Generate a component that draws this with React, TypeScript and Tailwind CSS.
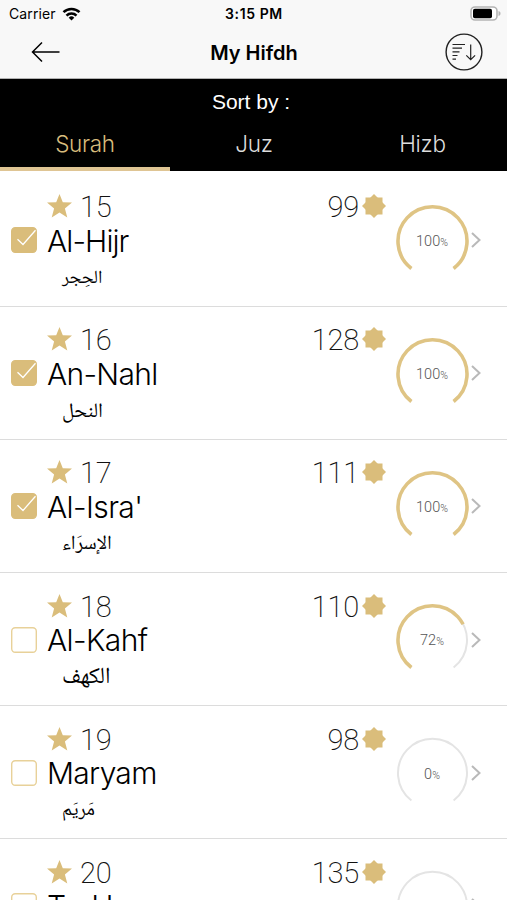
import { useState } from "react"
import clsx from "clsx"

interface Surah {
  number: number;
  name: string;
  nameClass: string;
  arabic: string;
  arabicClass: string;
  verses: number;
  progress: number;
}

const surahs: Surah[] = [
  { number: 15, name: "Al-Hijr", nameClass: "tracking-[-0.9px]", arabic: "الحِجر", arabicClass: "text-[18.5px]", verses: 99, progress: 100 },
  { number: 16, name: "An-Nahl", nameClass: "tracking-[-0.7px]", arabic: "النحل", arabicClass: "text-[20.5px]", verses: 128, progress: 100 },
  { number: 17, name: "Al-Isra'", nameClass: "tracking-[-0.6px]", arabic: "الإسرَاء", arabicClass: "text-[20px]", verses: 111, progress: 100 },
  { number: 18, name: "Al-Kahf", nameClass: "tracking-[-0.6px]", arabic: "الكهف", arabicClass: "text-[23px]", verses: 110, progress: 72 },
  { number: 19, name: "Maryam", nameClass: "tracking-[-0.7px]", arabic: "مَريَم", arabicClass: "text-[19px]", verses: 98, progress: 0 },
  { number: 20, name: "Ta-Ha", nameClass: "tracking-[-0.9px]", arabic: "طه", arabicClass: "text-[19px]", verses: 135, progress: 0 },
]

const tabs = ["Surah", "Juz", "Hizb"]

function StatusBar() {
  return (
    <div className="grid h-[27px] grid-cols-3 items-center pl-[9px] pr-[6px] text-[14px]">
      <div className="flex items-center gap-[6px]">
        <span className="tracking-[0.1px]">Carrier</span>
        <svg width="19" height="14" viewBox="0 0 18 14" fill="none" stroke="#000" strokeWidth="2.5">
          <path d="M1 5.2a11.3 11.3 0 0 1 16 0" />
          <path d="M4 8.6a7 7 0 0 1 10 0" />
          <path d="M9 13.5 6.2 10.7a4 4 0 0 1 5.6 0z" fill="#000" stroke="none" />
        </svg>
      </div>
      <span className="pr-[2px] text-center font-semibold tracking-[0.6px]">3:15 PM</span>
      <svg className="justify-self-end" width="31" height="15" viewBox="0 0 31 15">
        <rect x="1" y="1" width="26" height="13" rx="4" fill="#fff" stroke="#b4b4b4" strokeWidth="1.6" />
        <rect x="3" y="2.8" width="19" height="9.4" rx="1.8" fill="#000" />
        <path d="M28.5 5v5c1.6-.6 2-1.500 2-2.500s-.4-1.900-2-2.500z" fill="#b4b4b4" />
      </svg>
    </div>
  )
}

function Header() {
  return (
    <div className="grid h-[52px] grid-cols-[1fr_auto_1fr] items-center border-b border-[#b2b2b2] pb-[2px] pl-[31px] pr-[24px]">
      <button>
        <svg width="29" height="22" viewBox="0 0 29 22" fill="none" stroke="#000" strokeWidth="1.5">
          <path d="M28.500 11H1.500M11 1.500 1.500 11l9.500 9.500" />
        </svg>
      </button>
      <h1 className="pr-[6px] pt-[2px] text-center text-[20px] font-semibold whitespace-nowrap">My Hifdh</h1>
      <button className="justify-self-end">
        <svg width="38" height="38" viewBox="0 0 38 38" fill="none" stroke="#222">
          <circle cx="19" cy="19" r="17.900" strokeWidth="1.400" />
          <path d="M7.500 11.500h12.500M7.500 15.200h9.500M7.500 18.800h7M7.500 22.500h5M7.500 26.200h3.500" strokeWidth="1.200" />
          <path d="M25.700 11.500v15M21.300 22.300l4.400 4.400 4.400-4.400" strokeWidth="1.200" />
        </svg>
      </button>
    </div>
  )
}

function Star() {
  return (
    <svg width="25" height="24" viewBox="0 0 25 24" fill="#dabd7b">
      <path d="M12.500 0l3.300 8.200 9.200.4-7.100 5.900 2.400 9-7.800-5-7.800 5 2.400-9L0 8.600l9.200-.4z" />
    </svg>
  )
}

// Two overlaid squares, one turned by 45 degrees
function VerseMark() {
  return (
    <svg width="24" height="24" viewBox="0 0 24 24" fill="#dabd7b">
      <rect x="3.500" y="3.500" width="17" height="17" />
      <rect x="3.500" y="3.500" width="17" height="17" transform="rotate(45 12 12)" />
    </svg>
  )
}

function Checkbox({ checked }: { checked: boolean }) {
  return (
    <svg width="26" height="26" viewBox="0 0 26 26" fill="none">
      <rect
        x="0.700"
        y="0.700"
        width="24.600"
        height="24.600"
        rx="3.500"
        fill={checked ? "#dabd7b" : "#fff"}
        stroke={checked ? "#dabd7b" : "#e8d199"}
        strokeWidth="1.400"
      />
      {checked && <path d="M6.500 12.300l5.500 5.200L24.500 3.200" stroke="#fff" strokeWidth="1.300" />}
    </svg>
  )
}

function Gauge({ value }: { value: number }) {
  const arc = "M15.400 64.500A34.500 34.500 0 1 1 57.600 64.500"
  return (
    <div className="grid h-[73px] w-[73px] place-items-center">
      <svg className="col-start-1 row-start-1" width="73" height="73" viewBox="0 0 73 73" fill="none">
        <path d={arc} stroke="#e4e4e4" strokeWidth="2" />
        {value > 0 && (
          <path d={arc} stroke="#dfc484" strokeWidth="3.600" pathLength={100} strokeDasharray={`${value} 200`} />
        )}
      </svg>
      <span className="col-start-1 row-start-1 pt-[4px] font-['Roboto',sans-serif] text-[14.500px] leading-none font-light text-[#555]">
        {value}
        <span className="text-[10.500px]">%</span>
      </span>
    </div>
  )
}

function SurahRow({ surah }: { surah: Surah }) {
  return (
    <li className="flex h-[133.200px] shrink-0 border-b-[1.500px] border-[#dcdcdc] pl-[11px]">
      <div className="w-[36px] pt-[53.500px]">
        <Checkbox checked={surah.progress === 100} />
      </div>
      <div className="flex w-[200px] flex-col pt-[19px]">
        <div className="flex h-[27px] items-center gap-[8px]">
          <Star />
          <span className="pt-[3px] font-['Roboto',sans-serif] text-[29px] leading-none font-extralight tracking-[-0.2px] text-[#111]">
            {surah.number}
          </span>
        </div>
        <span className={clsx("h-[42px] text-[30px] leading-[42px] font-light whitespace-nowrap", surah.nameClass)}>
          {surah.name}
        </span>
        <span
          dir="rtl"
          className={clsx("self-start pl-[15px] font-['Noto_Naskh_Arabic','DejaVu_Sans',sans-serif] leading-[35px]", surah.arabicClass)}
        >
          {surah.arabic}
        </span>
      </div>
      <div className="flex h-[46px] w-[139px] items-center justify-end gap-[3px] pt-[19px]">
        <span className="pt-[3px] font-['Roboto',sans-serif] text-[29px] leading-none font-extralight tracking-[-0.2px] text-[#111]">
          {surah.verses}
        </span>
        <VerseMark />
      </div>
      <div className="flex h-[73px] items-center gap-[2px] pl-[9.500px] mt-[30px]">
        <Gauge value={surah.progress} />
        <svg width="10" height="16" viewBox="0 0 10 16" fill="none" stroke="#b9b9b9" strokeWidth="2">
          <path d="M1 1l7.500 7L1 15" />
        </svg>
      </div>
    </li>
  )
}

export default function App() {
  const [activeTab, setActiveTab] = useState("Surah")

  return (
    <div className="flex h-[900px] w-[507px] flex-col overflow-hidden bg-white font-['Inter',sans-serif] text-black">
      <div className="bg-[#f8f8f8]">
        <StatusBar />
        <Header />
      </div>
      <div className="h-[92px] bg-black text-white">
        <p className="h-[46px] pr-[5px] text-center font-['Liberation_Sans',sans-serif] text-[21px] leading-[46px]">Sort by :</p>
        <div className="grid h-[46px] grid-cols-[170px_168px_169px]">
          {tabs.map((tab) => (
            <button
              key={tab}
              onClick={() => setActiveTab(tab)}
              className={clsx(
                "border-b-4 pb-[4px] text-[22.500px] leading-none font-light tracking-[-0.3px]",
                tab === activeTab ? "border-[#dfc594] text-[#d8bd7d]" : "border-transparent text-[#ddd]",
              )}
            >
              {tab}
            </button>
          ))}
        </div>
      </div>
      <ul className="flex flex-col pt-[2.500px]">
        {surahs.map((surah) => (
          <SurahRow key={surah.number} surah={surah} />
        ))}
      </ul>
    </div>
  )
}
